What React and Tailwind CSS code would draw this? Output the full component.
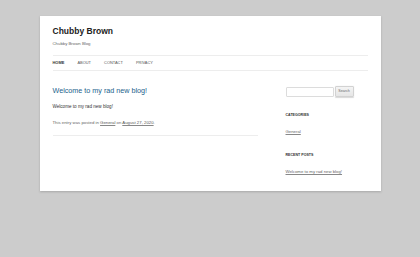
export default function App() {
  return (
    <div className="min-h-screen bg-[#cccccc] pt-[16px] font-['Liberation_Sans',Arial,sans-serif]">
      <div className="ml-[39.5px] w-[341px] bg-white px-[13px] shadow-[0_1px_2px_rgba(100,100,100,0.35)]">
        <header className="pt-[7.9px] pb-[7.9px]">
          <h1 className="text-[8.5px] leading-[15.7px] font-bold text-[#222]">Chubby Brown</h1>
          <h2 className="text-[4.3px] leading-[7.9px] text-[#666]">Chubby Brown Blog</h2>
          <nav className="mt-[7.9px] border-y border-[#ededed]">
            <ul className="flex gap-[13.1px] text-[3.94px] leading-[13.5px] uppercase text-[#555]">
              <li className="font-bold text-[#333]">Home</li>
              <li>About</li>
              <li>Contact</li>
              <li>Privacy</li>
            </ul>
          </nav>
        </header>

        <div className="mt-[7.9px] flex justify-between">
          <main className="w-[205px]">
            <article className="border-b-[1.5px] border-[#ededed] pb-[7.9px]">
              <h1 className="mb-[7.9px] text-[7.2px] leading-[8.6px] text-[#1a618b]">
                Welcome to my rad new blog!
              </h1>
              <p className="mb-[7.9px] text-[4.6px] leading-[7.9px] text-[#333]">
                Welcome to my rad new blog!
              </p>
              <footer className="text-[4.3px] leading-[7.9px] text-[#666]">
                This entry was posted in{" "}
                <a className="text-[#555] underline decoration-[#888] decoration-[length:0.4px]">General</a> on{" "}
                <a className="text-[#555] underline decoration-[#888] decoration-[length:0.4px]">August 27, 2020</a>.
              </footer>
            </article>
          </main>

          <aside className="w-[82px]">
            <div className="mb-[15.7px] flex h-[10px] items-center gap-[1px]">
              <div className="h-[10px] w-[48px] rounded-[1px] border border-[#dcdcdc] bg-white" />
              <button className="flex h-[11.5px] w-[19px] items-center justify-center rounded-[1px] border border-[#d2d2d2] bg-gradient-to-b from-[#f4f4f4] to-[#e6e6e6] text-[3.6px] text-[#666] shadow-[0_0.5px_1px_rgba(64,64,64,0.2)]">
                Search
              </button>
            </div>

            <div className="mb-[15.7px]">
              <h3 className="mb-[7.9px] text-[3.6px] leading-[7.9px] font-bold uppercase text-[#333]">
                Categories
              </h3>
              <a className="block text-[4.3px] leading-[7.9px] text-[#666] underline decoration-[#888] decoration-[length:0.4px]">
                General
              </a>
            </div>

            <div className="pb-[15.7px]">
              <h3 className="mb-[7.9px] text-[3.6px] leading-[7.9px] font-bold uppercase text-[#333]">
                Recent Posts
              </h3>
              <a className="block text-[4.3px] leading-[7.9px] text-[#666] underline decoration-[#888] decoration-[length:0.4px]">
                Welcome to my rad new blog!
              </a>
            </div>
          </aside>
        </div>
      </div>
    </div>
  );
}
